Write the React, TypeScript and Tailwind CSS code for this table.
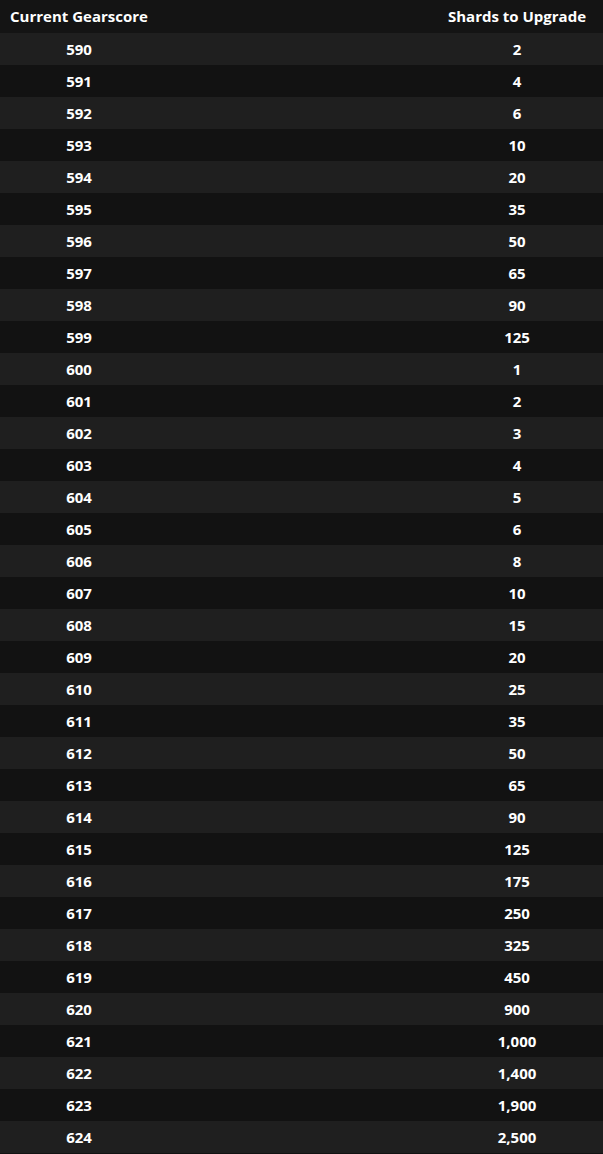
const rows: [number, string][] = [
  [590, "2"],
  [591, "4"],
  [592, "6"],
  [593, "10"],
  [594, "20"],
  [595, "35"],
  [596, "50"],
  [597, "65"],
  [598, "90"],
  [599, "125"],
  [600, "1"],
  [601, "2"],
  [602, "3"],
  [603, "4"],
  [604, "5"],
  [605, "6"],
  [606, "8"],
  [607, "10"],
  [608, "15"],
  [609, "20"],
  [610, "25"],
  [611, "35"],
  [612, "50"],
  [613, "65"],
  [614, "90"],
  [615, "125"],
  [616, "175"],
  [617, "250"],
  [618, "325"],
  [619, "450"],
  [620, "900"],
  [621, "1,000"],
  [622, "1,400"],
  [623, "1,900"],
  [624, "2,500"],
];

export default function App() {
  return (
    <div className="min-h-[1154px] bg-[#121212] font-['Open_Sans',sans-serif] text-[15px] font-bold text-white">
      <div className="grid h-[33px] grid-cols-[158px_1fr_172px] items-center bg-[#141414]">
        <div className="text-center">Current Gearscore</div>
        <div />
        <div className="text-center">Shards to Upgrade</div>
      </div>
      {rows.map(([score, shards], i) => (
        <div
          key={score}
          className={
            i % 2 === 0
              ? "grid h-[32px] grid-cols-[158px_1fr_172px] items-center bg-[#1f1f1f]"
              : "grid h-[32px] grid-cols-[158px_1fr_172px] items-center bg-[#121212]"
          }
        >
          <div className="text-center">{score}</div>
          <div />
          <div className="text-center">{shards}</div>
        </div>
      ))}
    </div>
  );
}
